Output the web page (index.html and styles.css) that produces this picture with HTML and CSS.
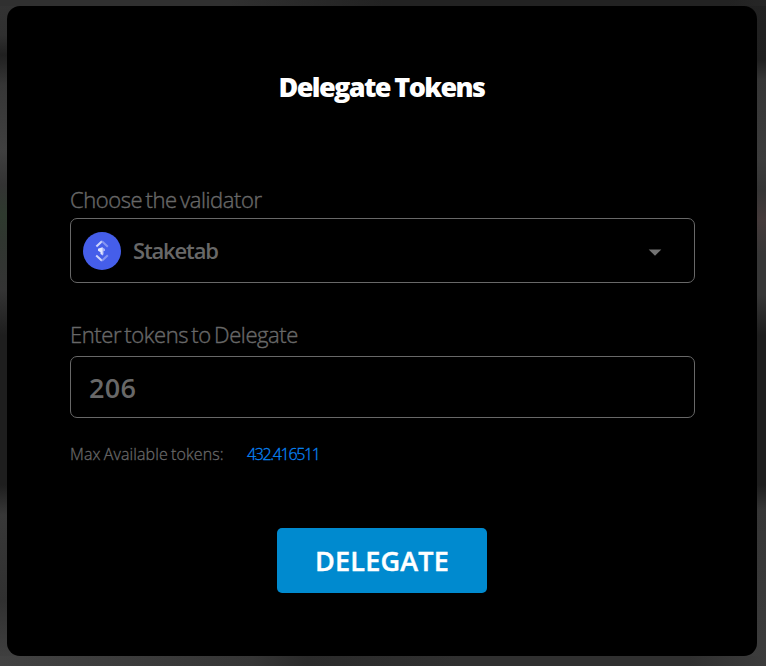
FILE: index.html
```
<!DOCTYPE html>
<html lang="en">
<head>
<meta charset="utf-8">
<title>Delegate Tokens</title>
<link rel="stylesheet" href="styles.css">
</head>
<body>
<main class="dialog">
  <h1 class="title"><span>Delegate Tokens</span></h1>
  <div class="label label-validator"><span>Choose the validator</span></div>
  <div class="field select">
    <svg class="avatar" width="38" height="38" viewBox="0 0 38 38">
      <circle cx="19" cy="19" r="19" fill="#455eea"/>
      <path d="M13.4 14.5 19 9.2" stroke="#d0d6fb" stroke-width="2" fill="none"/>
      <path d="M19 9.2 24.8 14.8" stroke="#8796f2" stroke-width="2" fill="none"/>
      <path d="M15 16.8 18.5 15.5H20V23.5L17.5 22V20.2L15 18.8Z" fill="#e3e7ff"/>
      <path d="M19.5 15.5 22 17V19H20.6V22.2L19.5 23.3Z" fill="#a5b0f6"/>
      <path d="M13.2 23.5 19 28.8" stroke="#d0d6fb" stroke-width="2" fill="none"/>
      <path d="M19 28.8 24.8 23.2" stroke="#8796f2" stroke-width="2" fill="none"/>
    </svg>
    <span class="validator">Staketab</span>
    <svg class="caret" width="14" height="8" viewBox="0 0 14 8"><path d="M.7 .5H13.3L7 6.8Z" fill="#737373"/></svg>
  </div>
  <div class="label label-amount"><span>Enter tokens to Delegate</span></div>
  <div class="field amount"><span>206</span></div>
  <div class="available"><span class="hint">Max Available tokens:</span><span class="max">432.416511</span></div>
  <button class="delegate"><span>DELEGATE</span></button>
</main>
</body>
</html>
```
FILE: styles.css
```
* { box-sizing: border-box; }
body {
  margin: 0;
  width: 766px;
  height: 666px;
  padding: 6px 9px 10px 7px;
  overflow: hidden;
  font-family: "Open Sans", "Noto Sans", sans-serif;
  background:
    linear-gradient(to right, #303030, #303030 30%, #222 50%, #222 95%, #262626) 0 0 / 766px 6px no-repeat,
    linear-gradient(to right, #424242, #363636 33%, #2b2b2b 40%, #303030 60%, #303030 90%, #3c3c3c) 0 656px / 766px 10px no-repeat,
    linear-gradient(#333 0, #303030 35px, #202020 55px, #363636 85px, #404040 150px, #333 185px, #2e3a2e 215px, #303630 240px, #343434 290px, #1e1e1e 335px, #1e1e1e 485px, #383838 515px, #303030 600px, #424242 666px) 0 0 / 20px 666px no-repeat,
    linear-gradient(#222 0, #202020 60px, #363636 80px, #3c3c3c 160px, #353535 190px, #443a3a 220px, #373737 255px, #373737 295px, #1e1e1e 335px, #1e1e1e 485px, #363636 510px, #3c3c3c 666px) 100% 0 / 25px 666px no-repeat,
    #292929;
}
.dialog {
  display: flex;
  flex-direction: column;
  height: 650px;
  padding: 61px 62px 63px 63px;
  border-radius: 13px;
  background: #000;
  color: #686868;
  white-space: nowrap;
}
.title {
  margin: 0 2px 0 0;
  height: 40px;
  line-height: 40px;
  text-align: center;
  color: #fff;
  font-size: 27px;
  font-weight: 800;
  letter-spacing: -1.6px;
  word-spacing: -1px;
}
.label {
  height: 30px;
  line-height: 30px;
  font-size: 22px;
  font-weight: 300;
  letter-spacing: -.42px;
  word-spacing: -2px;
  -webkit-text-stroke: .4px #686868;
}
.label-validator { margin-top: 77px; }
.label-amount { margin-top: 36px; }
.field {
  display: flex;
  align-items: center;
  border: 1px solid #686868;
  border-radius: 7px;
}
.select {
  height: 65px;
  margin-top: 4px;
  padding: 0 32px 0 12px;
}
.validator {
  margin: -2px 0 0 12px;
  font-size: 22px;
  font-weight: 600;
  letter-spacing: -1.15px;
}
.caret { margin: 4px 0 0 auto; }
.amount {
  height: 62px;
  margin-top: 7px;
  padding-left: 18px;
  font-size: 27px;
  font-weight: 600;
  letter-spacing: .3px;
}
.available {
  display: flex;
  gap: 24px;
  height: 24px;
  margin-top: 24px;
  line-height: 24px;
  font-size: 16px;
  font-weight: 300;
  letter-spacing: .1px;
  -webkit-text-stroke: .3px;
}
.hint { width: 153px; word-spacing: -1px; }
.max { color: #0784f5; letter-spacing: -1.35px; }
.delegate {
  width: 210px;
  height: 65px;
  margin: 62px auto 0 207px;
  padding: 0;
  border: 0;
  border-radius: 5px;
  background: #008acf;
  color: #fff;
  font: 600 27px "Open Sans", "Noto Sans", sans-serif;
  letter-spacing: .2px;
  -webkit-text-stroke: .4px #fff;
}
```
